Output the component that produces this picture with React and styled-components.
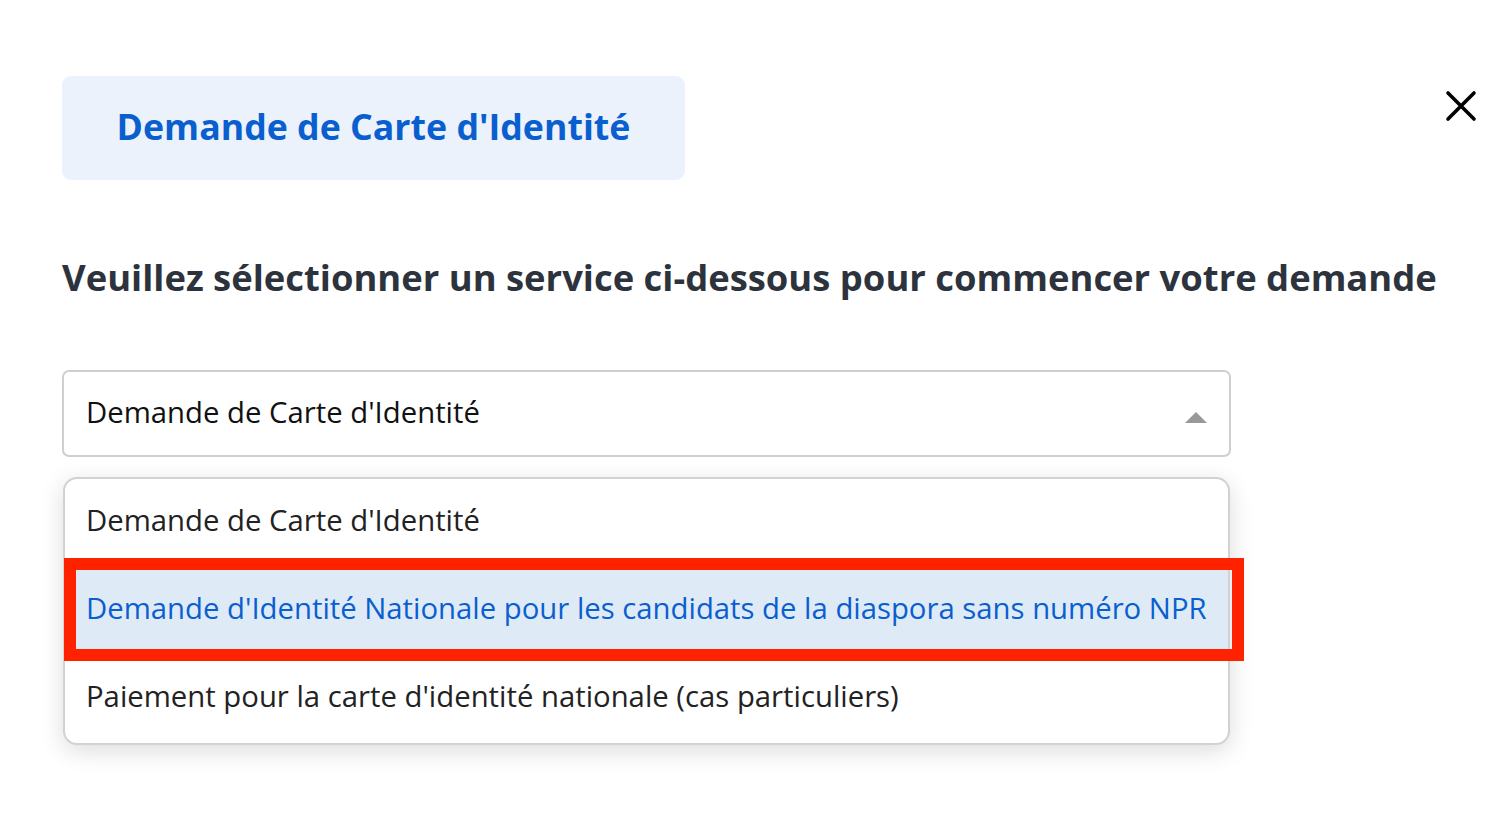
import React from "react";
import styled, { createGlobalStyle } from "styled-components";

const GlobalStyle = createGlobalStyle`
    html, body {
        margin: 0;
        padding: 0;
        background: #ffffff;
        font-family: "Open Sans", "Noto Sans", sans-serif;
    }
`;

const options = [
    "Demande de Carte d'Identité",
    "Demande d'Identité Nationale pour les candidats de la diaspora sans numéro NPR",
    "Paiement pour la carte d'identité nationale (cas particuliers)",
];

const App = () => {
    return (
        <Page>
            <GlobalStyle />
            <TopRow>
                <TabChip>Demande de Carte d'Identité</TabChip>
                <CloseButton aria-label="Fermer">
                    <svg width="32" height="32" viewBox="0 0 32 32">
                        <path d="M3 3 L29 29 M29 3 L3 29" stroke="#000" strokeWidth="3.6" strokeLinecap="round" />
                    </svg>
                </CloseButton>
            </TopRow>

            <Heading>Veuillez sélectionner un service ci-dessous pour commencer votre demande</Heading>

            <SelectWrap>
                <SelectBox>
                    <span>{options[0]}</span>
                    <Caret />
                </SelectBox>
                <Menu>
                    {options.map((o, i) => (
                        <Option key={o} active={i === 1}>
                            {o}
                            {i === 1 && <Highlight />}
                        </Option>
                    ))}
                </Menu>
            </SelectWrap>
        </Page>
    );
};

export default App;

const Page = styled.div`
    width: 1505px;
    height: 826px;
    box-sizing: border-box;
    padding: 76px 28px 0 62px;
    overflow: hidden;
`;

const TopRow = styled.div`
    display: flex;
    justify-content: space-between;
    align-items: flex-start;
`;

const TabChip = styled.div`
    height: 104px;
    width: 623px;
    box-sizing: border-box;
    padding-bottom: 4px;
    display: flex;
    align-items: center;
    justify-content: center;
    background-color: #ebf2fc;
    border-radius: 9px;
    color: #0a5fcf;
    font-size: 35.7px;
    font-weight: 700;
`;

const CloseButton = styled.div`
    margin-top: 14px;
    width: 32px;
    height: 32px;

    svg {
        display: block;
    }
`;

const Heading = styled.h2`
    margin: 72px 0 0;
    color: #2d333d;
    font-size: 36.4px;
    font-weight: 700;
    line-height: 50px;
    white-space: nowrap;
`;

const SelectWrap = styled.div`
    width: 1169px;
    margin-top: 68px;
`;

const SelectBox = styled.div`
    height: 87px;
    box-sizing: border-box;
    border: 2px solid #cfcfcf;
    border-radius: 7px;
    padding: 0 22px 4px 22px;
    display: flex;
    align-items: center;
    justify-content: space-between;
    font-size: 29.3px;
    color: #111;
`;

const Caret = styled.span`
    width: 0;
    height: 0;
    border-left: 11px solid transparent;
    border-right: 11px solid transparent;
    border-bottom: 11px solid #999;
    margin-top: 12px;
`;

const Menu = styled.div`
    margin: 20px 1px 0;
    box-sizing: border-box;
    border: 2px solid #d2d2d2;
    border-radius: 14px;
    padding: 0;
    background: #fff;
    box-shadow: 0 6px 24px rgba(0, 0, 0, 0.14);
`;

const Option = styled.div`
    position: relative;
    height: 88px;
    box-sizing: border-box;
    padding: 0 21px 6px;
    display: flex;
    align-items: center;
    font-size: 29.3px;
    color: ${(props) => (props.active ? "#0a5fcf" : "#222")};
    background: ${(props) => (props.active ? "#dfeaf7" : "transparent")};
`;

const Highlight = styled.span`
    position: absolute;
    top: -9px;
    left: -1px;
    width: 1180px;
    height: 103px;
    box-sizing: border-box;
    border: 12px solid #ff2200;
`;
